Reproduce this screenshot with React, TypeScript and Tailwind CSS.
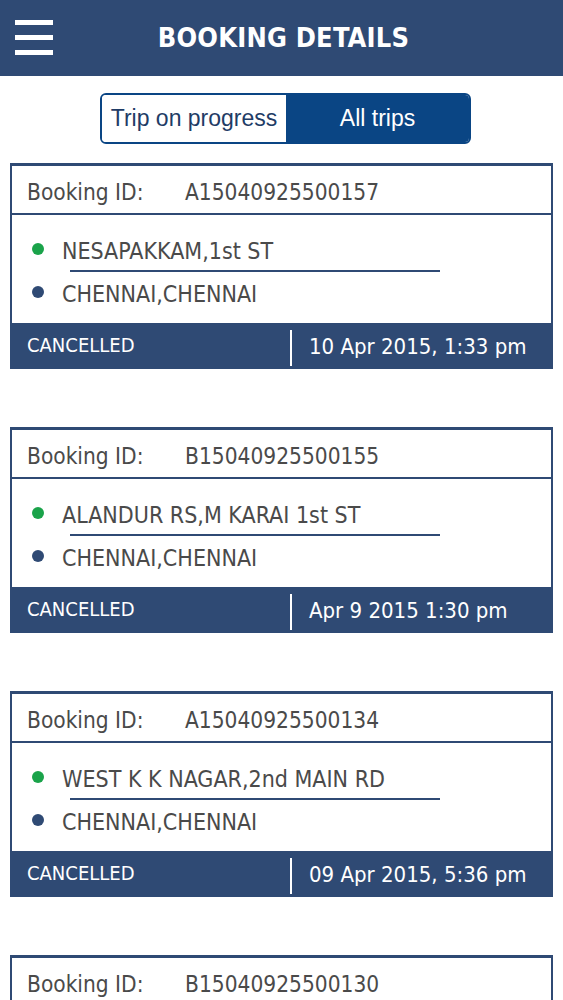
const bookings = [
  {
    id: "A15040925500157",
    from: "NESAPAKKAM,1st ST",
    to: "CHENNAI,CHENNAI",
    status: "CANCELLED",
    date: "10 Apr 2015, 1:33 pm",
  },
  {
    id: "B15040925500155",
    from: "ALANDUR RS,M KARAI 1st ST",
    to: "CHENNAI,CHENNAI",
    status: "CANCELLED",
    date: "Apr 9 2015 1:30 pm",
  },
  {
    id: "A15040925500134",
    from: "WEST K K NAGAR,2nd MAIN RD",
    to: "CHENNAI,CHENNAI",
    status: "CANCELLED",
    date: "09 Apr 2015, 5:36 pm",
  },
  {
    id: "B15040925500130",
    from: "VADAPALANI,100 FEET RD",
    to: "CHENNAI,CHENNAI",
    status: "CANCELLED",
    date: "09 Apr 2015, 4:12 pm",
  },
];

const BookingCard = ({ booking }: { booking: (typeof bookings)[number] }) => (
  <div className="border-2 border-t-[3px] border-[#2f4a74] bg-white">
    {/* Booking id */}
    <div className="h-[49px] flex items-center pt-[6px] px-[15px] border-b-2 border-[#2f4a74] text-[22.5px] text-[#4a4a4a]">
      <span className="w-[158px]">Booking ID:</span>
      <span>{booking.id}</span>
    </div>

    {/* Route */}
    <div className="h-[108px] pt-[19px] pl-[20px] text-[23px] text-[#4a4a4a]">
      <div className="flex items-center h-[34px]">
        <span className="w-[12px] h-[12px] rounded-full bg-[#1aa34a] mr-[18px] -mt-[4px]"></span>
        <span>{booking.from}</span>
      </div>
      <div className="ml-[38px] w-[370px] h-[2px] bg-[#2f4a74] mt-[2px]"></div>
      <div className="flex items-center h-[44px]">
        <span className="w-[12px] h-[12px] rounded-full bg-[#2f4a74] mr-[18px] -mt-[4px]"></span>
        <span>{booking.to}</span>
      </div>
    </div>

    {/* Status bar */}
    <div className="h-[44px] bg-[#2f4a74] flex items-center text-white">
      <div className="w-[278px] pl-[15px] text-[20px]">{booking.status}</div>
      <div className="w-[2px] h-[36px] bg-white mt-[6px]"></div>
      <div className="pl-[17px] pt-[3px] text-[22px]">{booking.date}</div>
    </div>
  </div>
);

const App = () => {
  return (
    <div
      className="w-[563px] h-[1000px] overflow-hidden bg-white"
      style={{ fontFamily: '"DejaVu Sans Condensed", "DejaVu Sans", sans-serif' }}
    >
      {/* Header */}
      <header className="h-[76px] bg-[#2f4a74] relative flex items-center justify-center">
        <div className="absolute left-[15px] top-[20px] flex flex-col gap-[10px]">
          <span className="block w-[38px] h-[5px] bg-white"></span>
          <span className="block w-[38px] h-[5px] bg-white"></span>
          <span className="block w-[38px] h-[5px] bg-white"></span>
        </div>
        <h1 className="text-white font-bold text-[27px] tracking-[0.2px] pl-[4px]">BOOKING DETAILS</h1>
      </header>

      {/* Toggle */}
      <div className="flex justify-center pt-[17px] pl-[8px]">
        <div
          className="flex w-[371px] h-[51px] rounded-[6px] border-2 border-[#0a4584] overflow-hidden"
          style={{ fontFamily: '"Liberation Sans", Arial, sans-serif' }}
        >
          <div className="w-[184px] flex items-center justify-center bg-white text-[#1f3c66] text-[23px]">
            Trip on progress
          </div>
          <div className="flex-1 flex items-center justify-center bg-[#0a4584] text-white text-[23px]">
            All trips
          </div>
        </div>
      </div>

      {/* Bookings */}
      <main className="px-[10px] pt-[19px] flex flex-col gap-[58px]">
        {bookings.map((b) => (
          <BookingCard key={b.id} booking={b} />
        ))}
      </main>
    </div>
  );
};

export default App;
